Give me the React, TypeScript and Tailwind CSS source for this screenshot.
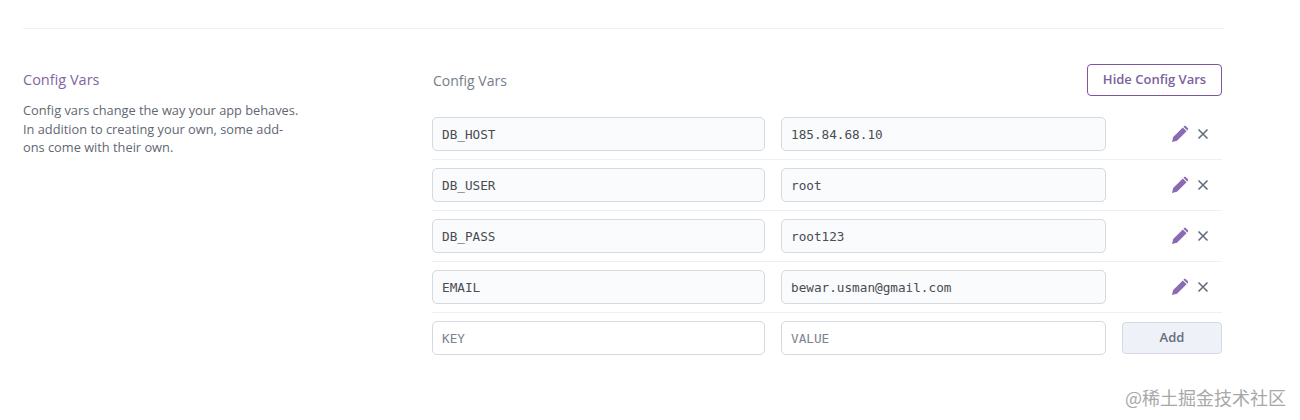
import React from "react";

const rows = [
  ["DB_HOST", "185.84.68.10"],
  ["DB_USER", "root"],
  ["DB_PASS", "root123"],
  ["EMAIL", "bewar.usman@gmail.com"],
];

const inputCls =
  "h-[34px] rounded-[5px] border border-[#d5d9e0] px-[9px] font-['DejaVu_Sans_Mono',monospace] text-[12.7px] text-[#4a4c52] outline-none placeholder:text-[#7c8390]";

function Pencil() {
  return (
    <svg width="18" height="18" viewBox="1 0 18 18" className="text-[#8a6bb1]" fill="currentColor">
      <path d="M1 17l1.2-5L11.8 2.4l3.8 3.8L6 15.8z" />
      <path d="M12.9 1.3c.6-.6 1.4-.6 2 0l1.8 1.8c.6.6.6 1.4 0 2l-.4.4-3.8-3.8z" />
    </svg>
  );
}

function Cross() {
  return (
    <svg width="12" height="12" viewBox="0 0 12 12" stroke="#666d7b" strokeWidth="1.6" fill="none">
      <path d="M1.5 1.5l9 9M10.5 1.5l-9 9" />
    </svg>
  );
}

function Row({ k, v }: { k: string; v: string }) {
  return (
    <div className="flex h-[51px] items-center border-b border-[#eef0f3]">
      <input readOnly value={k} className={inputCls + " w-[333px] bg-[#f9fbfd]"} />
      <input readOnly value={v} className={inputCls + " ml-[16px] w-[325px] bg-[#f9fbfd]"} />
      <div className="ml-auto flex w-[50px] items-center gap-[7px] pr-[12px]">
        <Pencil />
        <Cross />
      </div>
    </div>
  );
}

export default function App() {
  return (
    <div className="h-[420px] w-[1300px] overflow-hidden bg-white font-['Open_Sans',sans-serif]">
      <div className="ml-[23px] w-[1201px] pt-[28px]">
        <div className="border-t border-[#eef0f3]" />
        <div className="flex pt-[35px]">
          <div className="w-[409px]">
            <h2 className="pt-[6px] text-[14.5px] leading-[20px] text-[#7f65a5]">Config Vars</h2>
            <p className="mt-[11px] w-[280px] text-[12.8px] leading-[18.7px] text-[#5f6773]">
              Config vars change the way your app behaves. In addition to creating your own, some add-ons come with their own.
            </p>
          </div>
          <div className="w-[790px]">
            <div className="flex h-[32px] items-center justify-between">
              <span className="pl-[1px] pt-[1px] text-[14px] text-[#767d89]">Config Vars</span>
              <button className="h-[32px] w-[135px] rounded-[4px] border border-[#79589f] text-[13px] font-semibold text-[#7a629f]">
                Hide Config Vars
              </button>
            </div>
            <div className="mt-[13px]">
              {rows.map(([k, v]) => (
                <Row key={k} k={k} v={v} />
              ))}
              <div className="flex h-[50px] items-center">
                <input placeholder="KEY" className={inputCls + " w-[333px] bg-white"} />
                <input placeholder="VALUE" className={inputCls + " ml-[16px] w-[325px] bg-white"} />
                <button className="ml-auto h-[32px] w-[100px] rounded-[4px] border border-[#d5d9e3] bg-[#eef1f8] text-[13px] font-semibold text-[#666d7b]">
                  Add
                </button>
              </div>
            </div>
          </div>
        </div>
      </div>
      <div className="absolute left-[1125px] top-[385px] font-['Noto_Sans_CJK_SC',sans-serif] text-[18px] leading-[24px] text-[#a8a8a8]">
        @稀土掘金技术社区
      </div>
    </div>
  );
}
